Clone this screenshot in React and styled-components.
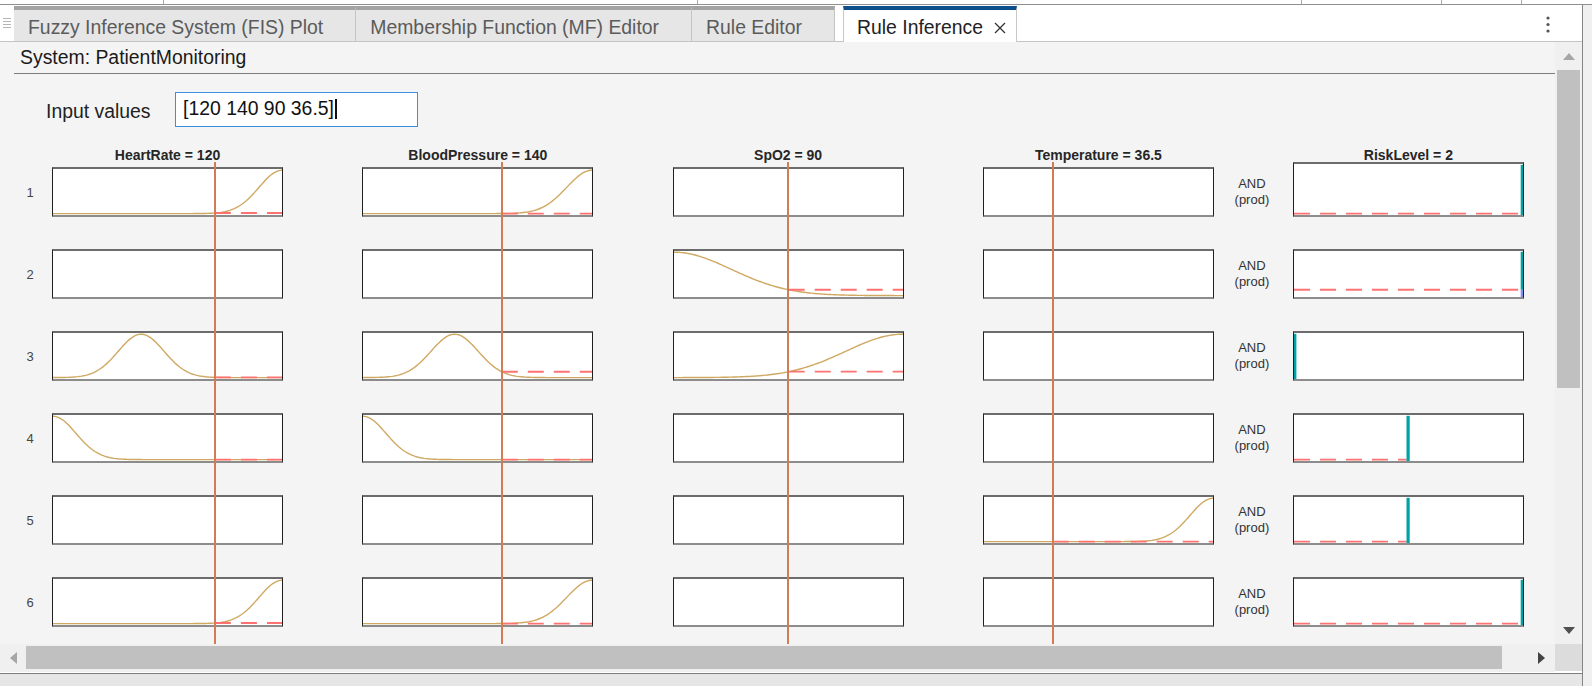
import styled, { createGlobalStyle } from 'styled-components'

const FONT = `'Liberation Sans', Arial, Helvetica, sans-serif`
const COLS = '52px 310.3px 310.3px 310.3px 231px 79px 231px'
const BOX_LEFTS = [52, 362.3, 672.6, 982.9]
const PW = 229

const inputs = [
  { title: 'HeartRate = 120', at: 0.707 },
  { title: 'BloodPressure = 140', at: 0.606 },
  { title: 'SpO2 = 90', at: 0.501 },
  { title: 'Temperature = 36.5', at: 0.3 },
]

const rules = [
  { mfs: [{ c: 1, s: 0.1 }, { c: 1, s: 0.11 }, null, null], out: { at: 1, dash: 'full' } },
  { mfs: [null, null, { c: 0, s: 0.25 }, null], out: { at: 1, dash: 'full', blue: true } },
  { mfs: [{ c: 0.385, s: 0.1 }, { c: 0.4, s: 0.103 }, { c: 1, s: 0.25 }, null], out: { at: 0, dash: 'none' } },
  { mfs: [{ c: 0, s: 0.1 }, { c: 0, s: 0.1 }, null, null], out: { at: 0.5, dash: 'left' } },
  { mfs: [null, null, null, { c: 1, s: 0.1 }], out: { at: 0.5, dash: 'left' } },
  { mfs: [{ c: 1, s: 0.1 }, { c: 1, s: 0.11 }, null, null], out: { at: 1, dash: 'full' } },
]

const gauss = (mf, u) => Math.exp(-((u - mf.c) ** 2) / (2 * mf.s * mf.s))
const yOf = (v, h) => h - 1.4 - v * (h - 2.6)

const GlobalStyle = createGlobalStyle`
  html, body { margin: 0; padding: 0; }
  body { font-family: ${FONT}; background: #fff; }
`

const Frame = styled.div`
  width: 1592px;
  height: 686px;
  display: flex;
  flex-direction: column;
  overflow: hidden;
  background: #fff;
  font-family: ${FONT};
`

const TopStrip = styled.div`
  height: 5px;
  display: flex;
  box-sizing: border-box;
  border-bottom: 1px solid #8f8f8f;
`

const TopCell = styled.div`
  width: ${(p) => p.$w}px;
  border-right: 1px solid #a9a9a9;
  box-sizing: border-box;
`

const Body = styled.div`
  flex: 1;
  display: flex;
  min-height: 0;
`

const MainColumn = styled.div`
  width: 1582px;
  display: flex;
  flex-direction: column;
`

const RightEdge = styled.div`
  flex: 1;
  background: #f0f0f0;
  border-left: 1px solid #858585;
`

const TabBar = styled.div`
  height: 37px;
  box-sizing: border-box;
  padding-top: 1px;
  display: flex;
  align-items: stretch;
  border-bottom: 1px solid #c4c4c4;
  background: #fff;
`

const MenuGrip = styled.div`
  width: 14px;
  display: flex;
  justify-content: center;
  padding-top: 12px;
  box-sizing: border-box;
`

const Tab = styled.div`
  display: flex;
  align-items: center;
  box-sizing: border-box;
  padding: 3px 32px 0 14px;
  border-top: 4px solid #a3a3a3;
  border-right: 1px solid #c4c4c4;
  background: #e6e6e6;
  color: #5b5b5b;
  font-size: 19.4px;
  white-space: nowrap;
`

const ActiveTab = styled.div`
  display: flex;
  align-items: center;
  gap: 11px;
  box-sizing: border-box;
  margin: 0 0 -1px 8px;
  padding: 3px 10px 0 13px;
  border-top: 4px solid #0d4f8b;
  border-left: 1px solid #c8c8c8;
  border-right: 1px solid #c8c8c8;
  background: #fff;
  color: #222;
  font-size: 19.4px;
  white-space: nowrap;
`

const Kebab = styled.div`
  margin-left: auto;
  margin-right: 24px;
  width: 20px;
  display: flex;
  justify-content: center;
  padding-top: 10px;
`

const Workspace = styled.div`
  height: 602px;
  display: flex;
`

const Viewport = styled.div`
  width: 1555px;
  overflow: hidden;
  background: #f4f4f4;
`

const SystemBar = styled.div`
  margin-left: 14px;
  height: 32px;
  box-sizing: border-box;
  padding: 0 0 1px 6px;
  display: flex;
  align-items: center;
  border-bottom: 1px solid #7d7d7d;
  font-size: 19.4px;
  color: #1a1a1a;
`

const InputRow = styled.div`
  margin-top: 18px;
  padding-left: 46px;
  display: flex;
  align-items: center;
`

const InputLabel = styled.div`
  width: 129px;
  padding-top: 4px;
  font-size: 19.4px;
  color: #222;
`

const InputField = styled.div`
  width: 243px;
  height: 35px;
  box-sizing: border-box;
  border: 1px solid #3b8fde;
  background: #fff;
  padding: 0 0 3px 7px;
  display: flex;
  align-items: center;
  font-size: 19.4px;
  color: #111;
`

const Caret = styled.span`
  display: inline-block;
  width: 2.5px;
  height: 20px;
  margin: 2px 0 0 1px;
  background: #111;
`

const PlotStack = styled.div`
  position: relative;
  margin-top: 20px;
  display: flex;
  flex-direction: column;
`

const HeaderRow = styled.div`
  display: grid;
  grid-template-columns: ${COLS};
  height: 16px;
  margin-bottom: 4px;
`

const Heading = styled.div`
  grid-column: ${(p) => p.$col};
  width: 231px;
  text-align: center;
  font-size: 14px;
  line-height: 16px;
  font-weight: bold;
  color: #262626;
  white-space: nowrap;
`

const RuleList = styled.div`
  display: flex;
  flex-direction: column;
  gap: 32px;
`

const RuleRow = styled.div`
  display: grid;
  grid-template-columns: ${COLS};
  align-items: center;
`

const RowNumber = styled.div`
  padding-left: 8px;
  text-align: center;
  font-size: 13px;
  color: #444;
`

const PlotBox = styled.div`
  align-self: start;
  width: 231px;
  height: ${(p) => (p.$tall ? 55 : 50)}px;
  margin-top: ${(p) => (p.$tall ? -5 : 0)}px;
  box-sizing: border-box;
  background: #fff;
  border-top: 2px solid #6c6c6c;
  border-bottom: 2px solid #8c8c8c;
  border-left: 1px solid #202020;
  border-right: 1px solid #202020;
  svg {
    display: block;
  }
`

const Operator = styled.div`
  text-align: center;
  font-size: 13px;
  line-height: 16px;
  color: #333;
  padding-right: 3px;
`

const Marker = styled.div`
  position: absolute;
  top: 15px;
  bottom: -60px;
  left: ${(p) => p.$x}px;
  width: 2px;
  background: #d07d56;
`

const VScroll = styled.div`
  width: 27px;
  background: #f0f0f0;
  display: flex;
  flex-direction: column;
`

const ArrowZone = styled.div`
  height: ${(p) => p.$h || 28}px;
  width: ${(p) => p.$w || 'auto'};
  display: flex;
  align-items: center;
  justify-content: center;
  flex-shrink: 0;
`

const Tri = styled.div`
  width: 0;
  height: 0;
  ${(p) =>
    p.$dir === 'up' &&
    `border-left: 6.5px solid transparent; border-right: 6.5px solid transparent; border-bottom: 7px solid ${p.$c};`}
  ${(p) =>
    p.$dir === 'down' &&
    `border-left: 6.5px solid transparent; border-right: 6.5px solid transparent; border-top: 7px solid ${p.$c};`}
  ${(p) =>
    p.$dir === 'left' &&
    `border-top: 6px solid transparent; border-bottom: 6px solid transparent; border-right: 7px solid ${p.$c};`}
  ${(p) =>
    p.$dir === 'right' &&
    `border-top: 6px solid transparent; border-bottom: 6px solid transparent; border-left: 7px solid ${p.$c};`}
`

const VThumb = styled.div`
  margin-left: 2px;
  width: 23px;
  height: 318px;
  background: #c0c0c0;
`

const Fill = styled.div`
  flex: 1;
`

const HScroll = styled.div`
  height: 29px;
  display: flex;
`

const HTrack = styled.div`
  width: 1555px;
  height: 28px;
  background: #f0f0f0;
  display: flex;
`

const HThumb = styled.div`
  width: 1476px;
  margin: 2px 0 3px;
  background: #c0c0c0;
`

const Corner = styled.div`
  width: 27px;
  height: 27px;
  background: #dcdcdc;
`

const BottomStrip = styled.div`
  flex: 1;
  background: #e6e6e6;
  border-top: 1px solid #7d7d7d;
`

const curvePath = (mf, h) => {
  const pts = []
  for (let i = 0; i <= 120; i++) {
    const u = i / 120
    pts.push(`${(u * PW).toFixed(2)},${yOf(gauss(mf, u), h).toFixed(2)}`)
  }
  return `M${pts.join(' L')}`
}

const InputPlot = ({ mf, at }) => {
  const h = 46
  return (
    <PlotBox>
      <svg width={PW} height={h}>
        {mf && (
          <>
            <path d={curvePath(mf, h)} fill='none' stroke='#cfa862' strokeWidth='1.4' />
            <line
              x1={at * PW}
              x2={PW}
              y1={yOf(gauss(mf, at), h)}
              y2={yOf(gauss(mf, at), h)}
              stroke='#ff7272'
              strokeWidth='1.8'
              strokeDasharray='16 10'
            />
          </>
        )}
      </svg>
    </PlotBox>
  )
}

const OutputPlot = ({ out, level, tall }) => {
  const h = tall ? 51 : 46
  const y = yOf(level, h)
  const tealX = out.at === 1 ? PW - 2.3 : out.at === 0 ? 0 : out.at * PW - 2
  const tealW = out.at === 0.5 ? 3.2 : 2.4
  const dashEnd = out.dash === 'left' ? tealX : PW
  return (
    <PlotBox $tall={tall}>
      <svg width={PW} height={h}>
        {out.dash !== 'none' && (
          <line x1='0' x2={dashEnd} y1={y} y2={y} stroke='#ff7272' strokeWidth='1.8' strokeDasharray='16 10' />
        )}
        <rect x={tealX} y='0.8' width={tealW} height={(out.blue ? y : h) - 0.8} fill='#00a3a3' />
        {out.blue && <rect x={tealX} y={y} width={tealW} height={h - y} fill='#8190f2' />}
      </svg>
    </PlotBox>
  )
}

const App = () => {
  return (
    <>
      <GlobalStyle />
      <Frame>
        <TopStrip>
          <TopCell $w={164} />
          <TopCell $w={534} />
          <TopCell $w={604} />
          <TopCell $w={140} />
          <TopCell $w={80} />
        </TopStrip>
        <Body>
          <MainColumn>
            <TabBar>
              <MenuGrip>
                <svg width='8' height='12'>
                  {[0.5, 3.5, 6.5, 9.5].map((y) => (
                    <line key={y} x1='0' x2='8' y1={y} y2={y} stroke='#b5b5b5' strokeWidth='1' />
                  ))}
                </svg>
              </MenuGrip>
              <Tab>Fuzzy Inference System (FIS) Plot</Tab>
              <Tab>Membership Function (MF) Editor</Tab>
              <Tab>Rule Editor</Tab>
              <ActiveTab>
                Rule Inference
                <svg width='12' height='12'>
                  <path d='M1 1 L11 11 M11 1 L1 11' stroke='#333' strokeWidth='1.3' />
                </svg>
              </ActiveTab>
              <Kebab>
                <svg width='4' height='18'>
                  <circle cx='2' cy='2' r='1.6' fill='#555' />
                  <circle cx='2' cy='8.5' r='1.6' fill='#555' />
                  <circle cx='2' cy='15' r='1.6' fill='#555' />
                </svg>
              </Kebab>
            </TabBar>
            <Workspace>
              <Viewport>
                <SystemBar>System: PatientMonitoring</SystemBar>
                <InputRow>
                  <InputLabel>Input values</InputLabel>
                  <InputField>
                    [120 140 90 36.5]
                    <Caret />
                  </InputField>
                </InputRow>
                <PlotStack>
                  <HeaderRow>
                    {inputs.map((inp, i) => (
                      <Heading key={inp.title} $col={i + 2}>
                        {inp.title}
                      </Heading>
                    ))}
                    <Heading $col={7}>RiskLevel = 2</Heading>
                  </HeaderRow>
                  <RuleList>
                    {rules.map((rule, r) => {
                      const level = rule.mfs.reduce((acc, mf, i) => (mf ? acc * gauss(mf, inputs[i].at) : acc), 1)
                      return (
                        <RuleRow key={r}>
                          <RowNumber>{r + 1}</RowNumber>
                          {rule.mfs.map((mf, i) => (
                            <InputPlot key={i} mf={mf} at={inputs[i].at} />
                          ))}
                          <Operator>
                            AND
                            <br />
                            (prod)
                          </Operator>
                          <OutputPlot out={rule.out} level={level} tall={r === 0} />
                        </RuleRow>
                      )
                    })}
                  </RuleList>
                  {inputs.map((inp, i) => (
                    <Marker key={inp.title} $x={BOX_LEFTS[i] + inp.at * PW} />
                  ))}
                </PlotStack>
              </Viewport>
              <VScroll>
                <ArrowZone>
                  <Tri $dir='up' $c='#a6a6a6' />
                </ArrowZone>
                <VThumb />
                <Fill />
                <ArrowZone>
                  <Tri $dir='down' $c='#505050' />
                </ArrowZone>
              </VScroll>
            </Workspace>
            <HScroll>
              <HTrack>
                <ArrowZone $w='26px'>
                  <Tri $dir='left' $c='#a6a6a6' />
                </ArrowZone>
                <HThumb />
                <Fill />
                <ArrowZone $w='28px'>
                  <Tri $dir='right' $c='#444' />
                </ArrowZone>
              </HTrack>
              <Corner />
            </HScroll>
            <BottomStrip />
          </MainColumn>
          <RightEdge />
        </Body>
      </Frame>
    </>
  )
}

export default App
